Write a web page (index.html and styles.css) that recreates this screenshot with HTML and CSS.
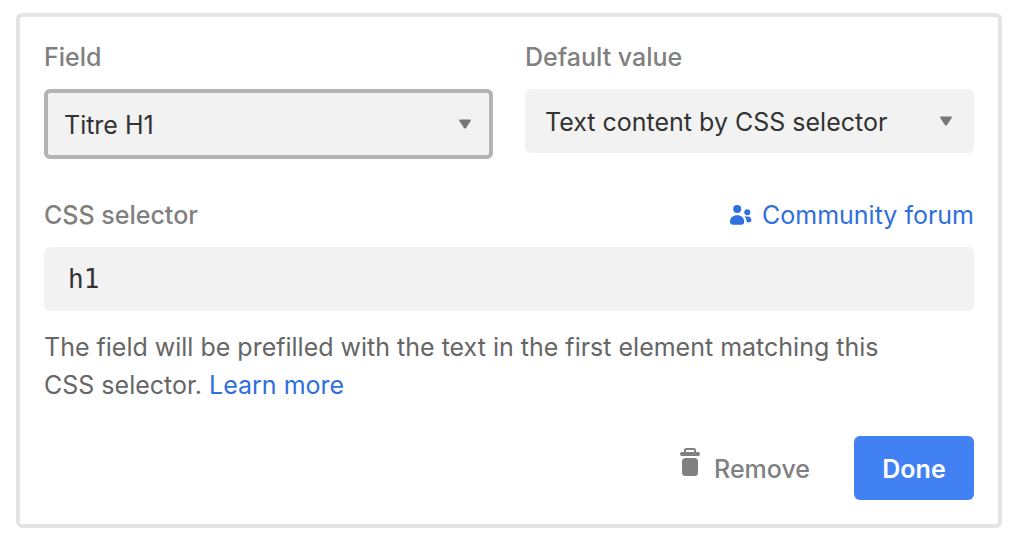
FILE: index.html
```html
<!DOCTYPE html>
<html lang="en">
<head>
    <meta charset="UTF-8">
    <meta name="viewport" content="width=device-width, initial-scale=1.0">
    <title>Edit field</title>
    <link rel="stylesheet" href="styles.css">
</head>
<body>
    <form class="card">
        <div class="columns">
            <div class="field">
                <label class="label" for="field-name">Field</label>
                <div class="select-wrap">
                    <select class="control select select-active" id="field-name">
                        <option>Titre H1</option>
                    </select>
                    <svg class="arrow" viewBox="0 0 12 10" aria-hidden="true">
                        <path d="M1 0.5h10q1.3 0.3 0.7 1.5L7 9q-1 1.2-2 0L0.3 2Q-0.3 0.8 1 0.5z"/>
                    </svg>
                </div>
            </div>
            <div class="field">
                <label class="label" for="default-value">Default value</label>
                <div class="select-wrap">
                    <select class="control select" id="default-value">
                        <option>Text content by CSS selector</option>
                    </select>
                    <svg class="arrow" viewBox="0 0 12 10" aria-hidden="true">
                        <path d="M1 0.5h10q1.3 0.3 0.7 1.5L7 9q-1 1.2-2 0L0.3 2Q-0.3 0.8 1 0.5z"/>
                    </svg>
                </div>
            </div>
        </div>

        <div class="field">
            <div class="label-row">
                <label class="label" for="selector">CSS selector</label>
                <a class="link forum" href="#">
                    <svg class="icon-people" viewBox="0 0 22 20" aria-hidden="true">
                        <circle cx="7.2" cy="4" r="4"/>
                        <path d="M0 16.5C0 12.8 3 10.2 7.1 10.2S14.2 12.8 14.2 16.5q0 3.3-3 3.3H3Q0 19.8 0 16.5z"/>
                        <circle cx="17.3" cy="7.2" r="3"/>
                        <path d="M14.6 11.6h3q3.8 0.3 3.8 3.9 0 1.7-1.7 1.7h-2.9q0-3.2-2.2-5.6z"/>
                    </svg>
                    <span>Community forum</span>
                </a>
            </div>
            <input class="control input" id="selector" type="text" value="h1">
            <p class="help">The field will be prefilled with the text in the first element matching this CSS selector. <a class="link" href="#">Learn more</a></p>
        </div>

        <div class="actions">
            <button class="button remove" type="button">
                <svg class="icon-trash" viewBox="0 0 20 28" aria-hidden="true">
                    <path d="M5 5V2.2Q5 1 6.2 1h7.6Q15 1 15 2.2V5" fill="none" stroke="currentColor" stroke-width="2"/>
                    <rect x="0" y="4" width="20" height="4" rx="2"/>
                    <rect x="2" y="10" width="16" height="18" rx="3.5"/>
                </svg>
                <span>Remove</span>
            </button>
            <button class="button done" type="submit">Done</button>
        </div>
    </form>
</body>
</html>
```

FILE: styles.css
```css
* {
    box-sizing: border-box;
}

body {
    margin: 0;
    padding: 13px 14px 12px 16px;
    font-family: Inter, "Liberation Sans", sans-serif;
    font-size: 25px;
    line-height: 38px;
    color: #666;
    background-color: #fff;
}

svg {
    fill: currentColor;
}

.card {
    display: flex;
    flex-direction: column;
    padding: 21px 24px 24px;
    border: 4px solid #e4e4e4;
    border-radius: 6px;
}

.columns {
    display: grid;
    grid-template-columns: 1fr 1fr;
    align-items: start;
    gap: 32px;
    margin-bottom: 37px;
}

.field {
    display: flex;
    flex-direction: column;
}

.label {
    color: #808080;
    font-weight: 500;
}

.field > .label,
.label-row {
    margin-bottom: 13px;
}

.label-row {
    display: flex;
    justify-content: space-between;
}

.control {
    width: 100%;
    height: 64px;
    border: none;
    border-radius: 6px;
    background-color: #f2f2f2;
    color: #333;
    font: inherit;
    outline: none;
}

.select-wrap {
    position: relative;
    display: flex;
}

.select {
    appearance: none;
    padding: 2px 64px 0 20px;
}

.select-active {
    height: 70px;
    padding: 2px 60px 0 16px;
    border: 4px solid #b3b3b3;
}

/* arrow over the right end of the select */
.arrow {
    position: absolute;
    top: 0;
    bottom: 0;
    right: 22px;
    width: 12px;
    height: 10px;
    margin: auto 0;
    color: #777;
    pointer-events: none;
}

.input {
    padding: 0 24px;
    font-family: "DejaVu Sans Mono", monospace;
    font-size: 26px;
}

.link {
    color: #2f6fde;
    text-decoration: none;
}

.forum {
    display: flex;
    align-items: center;
    gap: 10px;
}

.icon-people {
    width: 22px;
    height: 20px;
}

.help {
    max-width: 880px;
    margin: 17px 0 32px;
}

.actions {
    display: flex;
    justify-content: flex-end;
    gap: 16px;
}

.button {
    display: flex;
    align-items: center;
    justify-content: center;
    height: 64px;
    padding: 2px 28px 0;
    border: none;
    border-radius: 6px;
    font: inherit;
    font-weight: 500;
    cursor: pointer;
}

.remove {
    gap: 14px;
    background: none;
    color: #808080;
}

.icon-trash {
    width: 20px;
    height: 28px;
    margin-bottom: 14px;
}

.done {
    min-width: 120px;
    background-color: #4281f4;
    color: #fff;
    font-weight: 600;
}
```
